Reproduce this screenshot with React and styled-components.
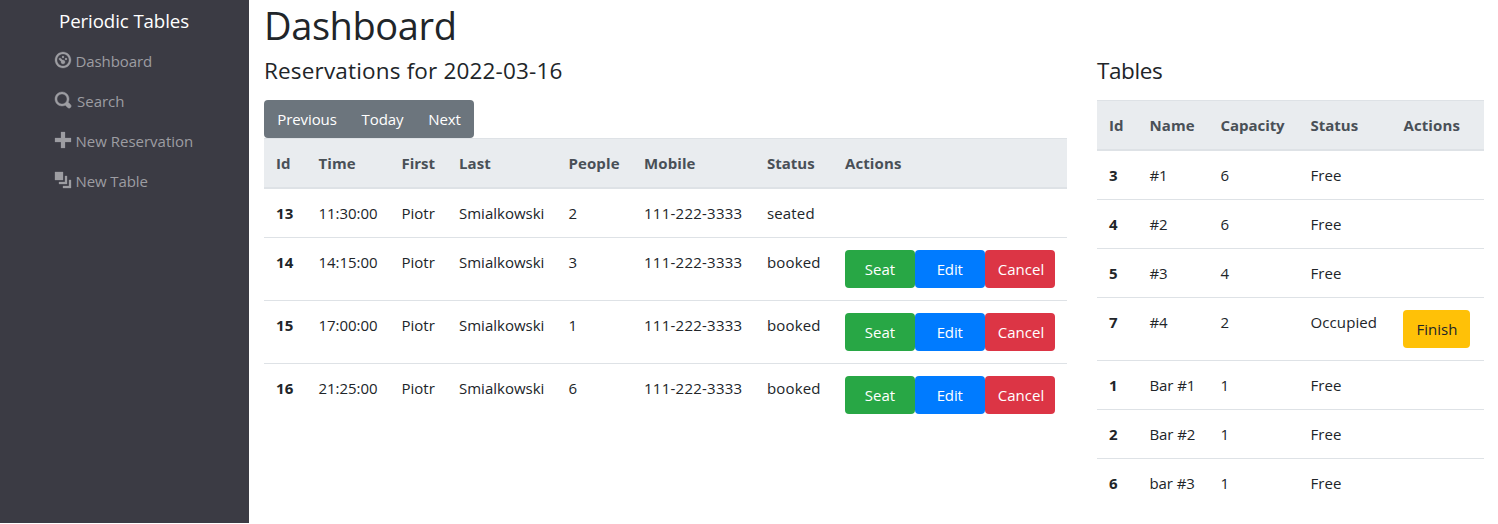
import React from "react";
import styled, { createGlobalStyle } from "styled-components";

const GlobalStyle = createGlobalStyle`
  *, *::before, *::after { box-sizing: border-box; }
  body {
    margin: 0;
    background: #fff;
    color: #212529;
    font-family: "Open Sans", "Noto Sans", sans-serif;
    font-size: 15px;
    line-height: 24px;
    overflow: hidden;
  }
`;

const Page = styled.div`
  display: flex;
  height: 524px;
`;

const Sidebar = styled.nav`
  width: 249px;
  height: 523px;
  flex: none;
  padding: 6px 0 0 54.5px;
  background: #3b3b44;
`;

const Brand = styled.div`
  padding-left: 4.5px;
  height: 30px;
  line-height: 30px;
  font-size: 18.7px;
  letter-spacing: -0.1px;
  color: #fff;
`;

const NavList = styled.ul`
  list-style: none;
  margin: 5px 0 0;
  padding: 0;
`;

const NavItem = styled.li`
  display: flex;
  align-items: center;
  gap: ${(p) => p.$gap || 5}px;
  height: 40px;
  color: #9d9da2;
  letter-spacing: ${(p) => p.$ls ?? -0.1}px;
  white-space: nowrap;
`;

const Icon = styled.svg`
  width: 16px;
  height: 16px;
  flex: none;
  margin-top: -2px;
  overflow: visible;
  fill: currentColor;
  stroke: currentColor;
  stroke-width: ${(p) => p.$stroke || 0};
`;

const Main = styled.main`
  flex: 1;
  padding: 1px 14px 0 15px;
`;

const Title = styled.h1`
  margin: 0 0 7px;
  font-size: 38px;
  line-height: 48px;
  font-weight: 400;
  letter-spacing: -0.4px;
`;

const Columns = styled.div`
  display: flex;
  justify-content: space-between;
`;

const Section = styled.section`
  width: ${(p) => p.$width}px;
`;

const Heading = styled.h4`
  margin: 0 0 15px;
  font-size: 22.5px;
  line-height: 29px;
  font-weight: 400;
  letter-spacing: ${(p) => p.$ls || 0}px;
  white-space: nowrap;
`;

const ButtonGroup = styled.div`
  display: flex;
  width: 210px;
  border-radius: 4px;
  background: #6c757d;
`;

const Button = styled.button`
  width: ${(p) => p.$width}px;
  height: 38px;
  padding: 0;
  border: 0;
  border-radius: 4px;
  background: ${(p) => p.$bg || "transparent"};
  color: ${(p) => p.$color || "#fff"};
  font: inherit;
  letter-spacing: ${(p) => p.$ls ?? -0.1}px;
  text-indent: ${(p) => p.$indent || 0}px;
  text-align: center;
`;

const Actions = styled.div`
  display: flex;
  margin-left: -0.5px;
`;

const Table = styled.table`
  width: 100%;
  table-layout: fixed;
  border-collapse: separate;
  border-spacing: 0;
`;

const HeadCell = styled.th`
  padding: 12px 0 12px 12.5px;
  border-top: 1px solid #dee2e6;
  border-bottom: 2px solid #dee2e6;
  background: #e9ecef;
  color: #495057;
  font-weight: 700;
  letter-spacing: ${(p) => p.$ls ?? 0.1}px;
  text-align: left;

  &:first-child { padding-left: 12px; }
`;

const Row = styled.tr`
  & + & > * { border-top: 1px solid #dee2e6; }
`;

const Cell = styled.td`
  padding: 12px 0 12px 12.5px;
  vertical-align: top;
  font-weight: ${(p) => (p.$bold ? 700 : 400)};
  letter-spacing: ${(p) => p.$ls || 0}px;
  white-space: nowrap;

  &:first-child { padding-left: 12px; }
`;

const navItems = [
  { label: "Dashboard", stroke: 0.15, path: "M4 0c-2.2 0-4 1.8-4 4s1.8 4 4 4 4-1.8 4-4-1.8-4-4-4zm0 1c1.66 0 3 1.34 3 3s-1.34 3-3 3-3-1.34-3-3 1.34-3 3-3zm0 1c-.28 0-.5.22-.5.5s.22.5.5.5.5-.22.5-.5-.22-.5-.5-.5zm-1.66 1a.5.5 0 0 0-.19.84l.91.91c-.02.08-.06.16-.06.25 0 .55.45 1 1 1s1-.45 1-1-.45-1-1-1c-.09 0-.17.04-.25.06l-.91-.91a.5.5 0 0 0-.44-.16.5.5 0 0 0-.06 0zm3.16 0c-.28 0-.5.22-.5.5s.22.5.5.5.5-.22.5-.5-.22-.5-.5-.5z" },
  { label: "Search", stroke: 0.22, gap: 6.5, ls: 0, path: "M3.5 0c-1.93 0-3.5 1.57-3.5 3.5s1.57 3.5 3.5 3.5c.59 0 1.17-.14 1.66-.41a1 1 0 0 0 .13.13l1 1a1.02 1.02 0 1 0 1.44-1.44l-1-1a1 1 0 0 0-.16-.13c.27-.49.44-1.06.44-1.66 0-1.93-1.55-3.5-3.5-3.5zm0 1c1.39 0 2.5 1.11 2.5 2.5 0 .66-.24 1.27-.66 1.72-.01.01-.02.02-.03.03a1 1 0 0 0-.13.13c-.44.4-1.04.63-1.69.63-1.39 0-2.5-1.11-2.5-2.5s1.11-2.5 2.5-2.5z" },
  { label: "New Reservation", stroke: 0.12, ls: 0, path: "M3 0v3h-3v2h3v3h2v-3h3v-2h-3v-3h-2z" },
  { label: "New Table", stroke: 0.15, path: "M0 0v4h4v-4h-4zm5 2v3h-3v1h4v-4h-1zm2 2v3h-3v1h4v-4h-1z" },
];

// Each column: heading, width, letter spacing of its body cells, letter spacing of its heading.
const reservationCols = [
  ["Id", 42, 0.2], ["Time", 83, -0.05], ["First", 57.5, 0, 0], ["Last", 109.5, 0],
  ["People", 75.5, 0], ["Mobile", 123, 0.25], ["Status", 78, 0.15, 0], ["Actions", 234.5, 0],
];

const reservations = [
  [13, "11:30:00", "Piotr", "Smialkowski", 2, "111-222-3333", "seated"],
  [14, "14:15:00", "Piotr", "Smialkowski", 3, "111-222-3333", "booked"],
  [15, "17:00:00", "Piotr", "Smialkowski", 1, "111-222-3333", "booked"],
  [16, "21:25:00", "Piotr", "Smialkowski", 6, "111-222-3333", "booked"],
];

const tableCols = [
  ["Id", 40, 0], ["Name", 71, -0.1], ["Capacity", 90, 0, -0.05], ["Status", 93, 0.1, 0], ["Actions", 93, 0],
];

const tables = [
  [3, "#1", 6, "Free"],
  [4, "#2", 6, "Free"],
  [5, "#3", 4, "Free"],
  [7, "#4", 2, "Occupied"],
  [1, "Bar #1", 1, "Free"],
  [2, "Bar #2", 1, "Free"],
  [6, "bar #3", 1, "Free"],
];

const Col = styled.col`
  width: ${(p) => p.$width}px;
`;

function DataTable({ cols, rows, renderActions }) {
  return (
    <Table>
      <colgroup>
        {cols.map(([name, width]) => <Col key={name} $width={width} />)}
      </colgroup>
      <thead>
        <tr>
          {cols.map(([name, , , ls]) => <HeadCell key={name} $ls={ls}>{name}</HeadCell>)}
        </tr>
      </thead>
      <tbody>
        {rows.map((row) => (
          <Row key={row[0]}>
            {row.map((value, i) => (
              <Cell key={i} $bold={i === 0} $ls={cols[i][2]}>{value}</Cell>
            ))}
            <Cell>{renderActions(row)}</Cell>
          </Row>
        ))}
      </tbody>
    </Table>
  );
}

export default function App() {
  return (
    <Page>
      <GlobalStyle />
      <Sidebar>
        <Brand>Periodic Tables</Brand>
        <NavList>
          {navItems.map(({ label, path, gap, ls, stroke }) => (
            <NavItem key={label} $gap={gap} $ls={ls}>
              <Icon viewBox="0 0 8 8" $stroke={stroke}><path d={path} /></Icon>
              <span>{label}</span>
            </NavItem>
          ))}
        </NavList>
      </Sidebar>
      <Main>
        <Title>Dashboard</Title>
        <Columns>
          <Section $width={803}>
            <Heading $ls={0.17}>Reservations for 2022-03-16</Heading>
            <ButtonGroup>
              <Button $width={86}>Previous</Button>
              <Button $width={65}>Today</Button>
              <Button $width={59}>Next</Button>
            </ButtonGroup>
            <DataTable
              cols={reservationCols}
              rows={reservations}
              renderActions={(row) => row[6] === "booked" && (
                <Actions>
                  <Button $width={70} $bg="#28a745" $ls={0} $indent={1}>Seat</Button>
                  <Button $width={70} $bg="#007bff" $indent={0.5}>Edit</Button>
                  <Button $width={70} $bg="#dc3545" $ls={0.05} $indent={3}>Cancel</Button>
                </Actions>
              )}
            />
          </Section>
          <Section $width={387}>
            <Heading $ls={-0.4}>Tables</Heading>
            <DataTable
              cols={tableCols}
              rows={tables}
              renderActions={(row) => row[3] === "Occupied" && (
                <Actions>
                  <Button $width={67} $bg="#ffc107" $color="#212529" $ls={0} $indent={1}>Finish</Button>
                </Actions>
              )}
            />
          </Section>
        </Columns>
      </Main>
    </Page>
  );
}
